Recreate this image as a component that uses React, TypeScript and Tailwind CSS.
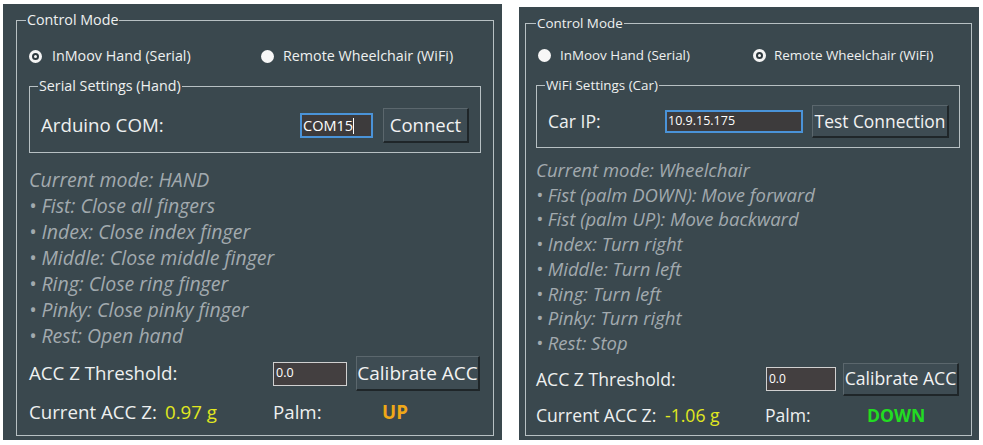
import React from 'react';

type RadioProps = { label: string; checked: boolean; gap: string };

const Radio = ({ label, checked, gap }: RadioProps) => (
  <div className={`flex items-center ${gap}`}>
    {checked ? (
      <span className="w-[13px] h-[13px] rounded-full border-[3px] border-[#f4f4f4] bg-[#2e393e] flex items-center justify-center">
        <span className="w-[3px] h-[3px] rounded-full bg-[#f4f4f4]" />
      </span>
    ) : (
      <span className="w-[13px] h-[13px] rounded-full bg-[#f7f7f7]" />
    )}
    <span>{label}</span>
  </div>
);

const Button = ({ children, className }: { children: React.ReactNode; className: string }) => (
  <div
    className={`flex items-center justify-center bg-[#3e4c53] border-t border-l border-[#5b676d] border-r-2 border-b-2 border-r-[#1f2629] border-b-[#1f2629] text-[#f2f2f2] whitespace-nowrap ${className}`}
  >
    {children}
  </div>
);

const handLines = [
  'Current mode: HAND',
  '• Fist: Close all fingers',
  '• Index: Close index finger',
  '• Middle: Close middle finger',
  '• Ring: Close ring finger',
  '• Pinky: Close pinky finger',
  '• Rest: Open hand',
];

const carLines = [
  'Current mode: Wheelchair',
  '• Fist (palm DOWN): Move forward',
  '• Fist (palm UP): Move backward',
  '• Index: Turn right',
  '• Middle: Turn left',
  '• Ring: Turn left',
  '• Pinky: Turn right',
  '• Rest: Stop',
];

const panelBase = "bg-[#3a484e] font-['Open_Sans',sans-serif] text-[#eef0f0]";

const HandPanel = () => (
  <div className={`${panelBase} ml-[3px] mt-[4px] w-[499px] h-[436px] pl-[13px] pr-[8px] pt-[7px] pb-[4px]`}>
    <fieldset className="h-full border border-[#b7c0c3] pl-[12px] pr-[12px] flex flex-col">
      <legend className="ml-[-3px] px-[1px] text-[14.3px] leading-[18px]">Control Mode</legend>

      <div className="mt-[17px] h-[20px] flex items-center text-[14.3px]">
        <div className="w-[232px]">
          <Radio label="InMoov Hand (Serial)" checked gap="gap-[10px]" />
        </div>
        <Radio label="Remote Wheelchair (WiFi)" checked={false} gap="gap-[9px]" />
      </div>

      <fieldset className="mt-[11px] border border-[#b7c0c3] pl-[11px] pr-[11px] pb-[9px]">
        <legend className="ml-[-3px] px-[1px] text-[14.3px] leading-[18px]">Serial Settings (Hand)</legend>
        <div className="mt-[13px] flex items-center justify-between">
          <span className="text-[18.7px]">Arduino COM:</span>
          <div className="flex items-center gap-[10px]">
            <div className="w-[73px] h-[25px] bg-[#3d3b3c] border-2 border-[#4a93d8] flex items-center pl-[1px] text-[14.5px] text-white">
              COM15<span className="w-[1px] h-[16px] bg-white" />
            </div>
            <Button className="w-[86px] h-[35px] text-[18.5px]">Connect</Button>
          </div>
        </div>
      </fieldset>

      <div className="mt-[14px] italic text-[19.5px] leading-[26px] text-[#a2aaae]">
        {handLines.map((l) => (
          <div key={l}>{l}</div>
        ))}
      </div>

      <div className="mt-[7px] h-[35px] flex items-center">
        <span className="w-[244px] text-[18.7px]">ACC Z Threshold:</span>
        <div className="w-[74px] h-[24px] bg-[#433f40] border border-[#d0d0d0] flex items-center pl-[2px] text-[12.5px] text-white">
          0.0
        </div>
        <Button className="ml-[9px] w-[124px] h-[35px] text-[19px]">Calibrate ACC</Button>
      </div>

      <div className="mt-[8px] h-[26px] flex items-center text-[18.7px]">
        <span className="w-[136px]">Current ACC Z:</span>
        <span className="w-[108px] text-[#e1e81f]">0.97 g</span>
        <span className="w-[109px]">Palm:</span>
        <span className="font-bold text-[#f0a818]">UP</span>
      </div>
    </fieldset>
  </div>
);

const CarPanel = () => (
  <div className={`${panelBase} ml-[17px] mt-[7px] w-[460px] h-[433px] pl-[6px] pr-[7px] pt-[7px] pb-[4px]`}>
    <fieldset className="h-full border border-[#b7c0c3] pl-[10px] pr-[11px] flex flex-col">
      <legend className="ml-0 px-[1px] text-[13.4px] leading-[18px]">Control Mode</legend>

      <div className="mt-[13px] h-[20px] flex items-center text-[13.4px] pl-[2px]">
        <div className="w-[215px]">
          <Radio label="InMoov Hand (Serial)" checked={false} gap="gap-[9px]" />
        </div>
        <Radio label="Remote Wheelchair (WiFi)" checked gap="gap-[8px]" />
      </div>

      <fieldset className="mt-[11px] border border-[#b7c0c3] pl-[11px] pr-[10px] pb-[9px]">
        <legend className="ml-[-3px] px-[1px] text-[13.4px] leading-[18px]">WiFi Settings (Car)</legend>
        <div className="mt-[11px] flex items-center justify-between">
          <span className="text-[17.6px]">Car IP:</span>
          <div className="flex items-center gap-[9px]">
            <div className="w-[138px] h-[23px] bg-[#3d3b3c] border-2 border-[#4a93d8] flex items-center pl-[1px] text-[12.5px] text-white">
              10.9.15.175
            </div>
            <Button className="w-[137px] h-[33px] text-[17.4px]">Test Connection</Button>
          </div>
        </div>
      </fieldset>

      <div className="mt-[10px] italic text-[18.5px] leading-[24.7px] text-[#a2aaae]">
        {carLines.map((l) => (
          <div key={l}>{l}</div>
        ))}
      </div>

      <div className="mt-[7px] h-[33px] flex items-center">
        <span className="w-[230px] text-[17.6px]">ACC Z Threshold:</span>
        <div className="w-[70px] h-[24px] bg-[#433f40] border border-[#d0d0d0] flex items-center pl-[2px] text-[12px] text-white">
          0.0
        </div>
        <Button className="ml-[7px] w-[116px] h-[33px] text-[17.6px]">Calibrate ACC</Button>
      </div>

      <div className="mt-[7px] h-[26px] flex items-center text-[17.6px]">
        <span className="w-[129px]">Current ACC Z:</span>
        <span className="w-[100px] text-[#e1e81f]">-1.06 g</span>
        <span className="w-[102px]">Palm:</span>
        <span className="font-bold text-[#22dc22]">DOWN</span>
      </div>
    </fieldset>
  </div>
);

export default function App() {
  return (
    <div className="w-[983px] h-[445px] bg-white flex items-start">
      <HandPanel />
      <CarPanel />
    </div>
  );
}
